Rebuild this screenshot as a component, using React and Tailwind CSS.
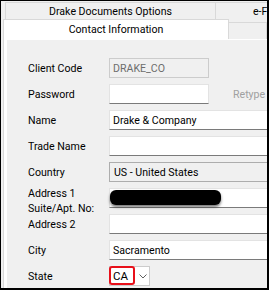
import React from 'react';

const Row = ({ label, children }) => (
  <div className="flex h-[20px] items-center">
    <div className="w-[81px] shrink-0 text-black whitespace-nowrap">{label}</div>
    {children}
  </div>
);

const TextBox = ({ value, className = '' }) => (
  <div className={`h-[20px] shrink-0 bg-white border border-[#e3e3e3] border-b-[#7a7a7a] pl-[3px] flex items-center text-black whitespace-nowrap ${className}`}>
    {value}
  </div>
);

export default function App() {
  return (
    <div className="w-[269px] h-[290px] bg-[#f0f0f0] border-t border-l border-r-2 border-b-2 border-black overflow-hidden font-['Roboto',sans-serif] text-[10.6px] leading-[15px]">
      {/* first tab row */}
      <div className="flex h-[17px] mt-[1px] pl-[4px]">
        <div className="w-[211px] shrink-0 bg-[#f0f0f0] border border-b-0 border-[#d9d9d9] flex items-center justify-center text-black">
          Drake Documents Options
        </div>
        <div className="w-[60px] shrink-0 bg-[#f0f0f0] border border-b-0 border-l-0 border-[#d9d9d9] pl-[37px] flex items-center text-black whitespace-nowrap">
          e-File
        </div>
      </div>

      {/* second tab row */}
      <div className="flex h-[20px] pl-[2px]">
        <div className="w-[226px] shrink-0 bg-white border border-b-0 border-[#d9d9d9] flex items-center justify-center text-black">
          Contact Information
        </div>
        <div className="flex-1 mt-[3px] bg-[#f0f0f0] border-t border-r border-[#d9d9d9]" />
      </div>

      {/* tab page */}
      <div className="ml-[2px] h-[260px] bg-white border-l border-[#d9d9d9] pl-[3px] pt-[1px]">
        <div className="h-full bg-[#f0f0f0] pl-[21px] pt-[18px] flex flex-col gap-[6px]">
          <Row label="Client Code">
            <div className="h-[20px] w-[100px] shrink-0 bg-[#f0f0f0] border border-[#cccccc] pl-[3px] flex items-center text-[#6d6d6d]">
              DRAKE_CO
            </div>
          </Row>
          <Row label="Password">
            <TextBox value="" className="w-[100px]" />
            <div className="ml-[24px] text-[#a0a0a0] whitespace-nowrap">Retype</div>
          </Row>
          <Row label="Name">
            <TextBox value="Drake & Company" className="w-[200px]" />
          </Row>
          <Row label="Trade Name">
            <TextBox value="" className="w-[200px]" />
          </Row>
          <Row label="Country">
            <div className="h-[20px] w-[200px] shrink-0 bg-[#f0f0f0] border border-[#adadad] pl-[4px] flex items-center text-black whitespace-nowrap">
              US - United States
            </div>
          </Row>
          <div className="flex h-[20px] items-start">
            <div className="w-[81px] shrink-0 -mt-[2px] text-black whitespace-nowrap">
              <div>Address 1</div>
              <div>Suite/Apt. No:</div>
            </div>
            <div className="relative h-[20px] w-[200px] shrink-0 bg-white border border-[#e3e3e3] border-b-[#7a7a7a]">
              <div className="absolute left-0 top-[1px] w-[111px] h-[15px] rounded-[6px] bg-black shadow-[0_2px_3px_rgba(0,0,0,0.55)]" />
            </div>
          </div>
          <Row label="Address 2">
            <TextBox value="" className="w-[200px]" />
          </Row>
          <Row label="City">
            <TextBox value="Sacramento" className="w-[200px]" />
          </Row>
          <Row label="State">
            <div className="relative h-[20px] w-[41px] shrink-0 bg-white border border-[#cccccc] flex items-center">
              <div className="absolute -left-[1px] -top-[1px] w-[26px] h-[19px] rounded-[3px] border-2 border-[#e8101a]" />
              <span className="pl-[3px] text-black text-[11.5px]">CA</span>
              <svg className="absolute left-[29px] top-[7px]" width="8" height="5" viewBox="0 0 8 5">
                <path d="M0.5 0.5 L4 4 L7.5 0.5" fill="none" stroke="#606060" strokeWidth="1" />
              </svg>
            </div>
          </Row>
        </div>
      </div>
    </div>
  );
}
